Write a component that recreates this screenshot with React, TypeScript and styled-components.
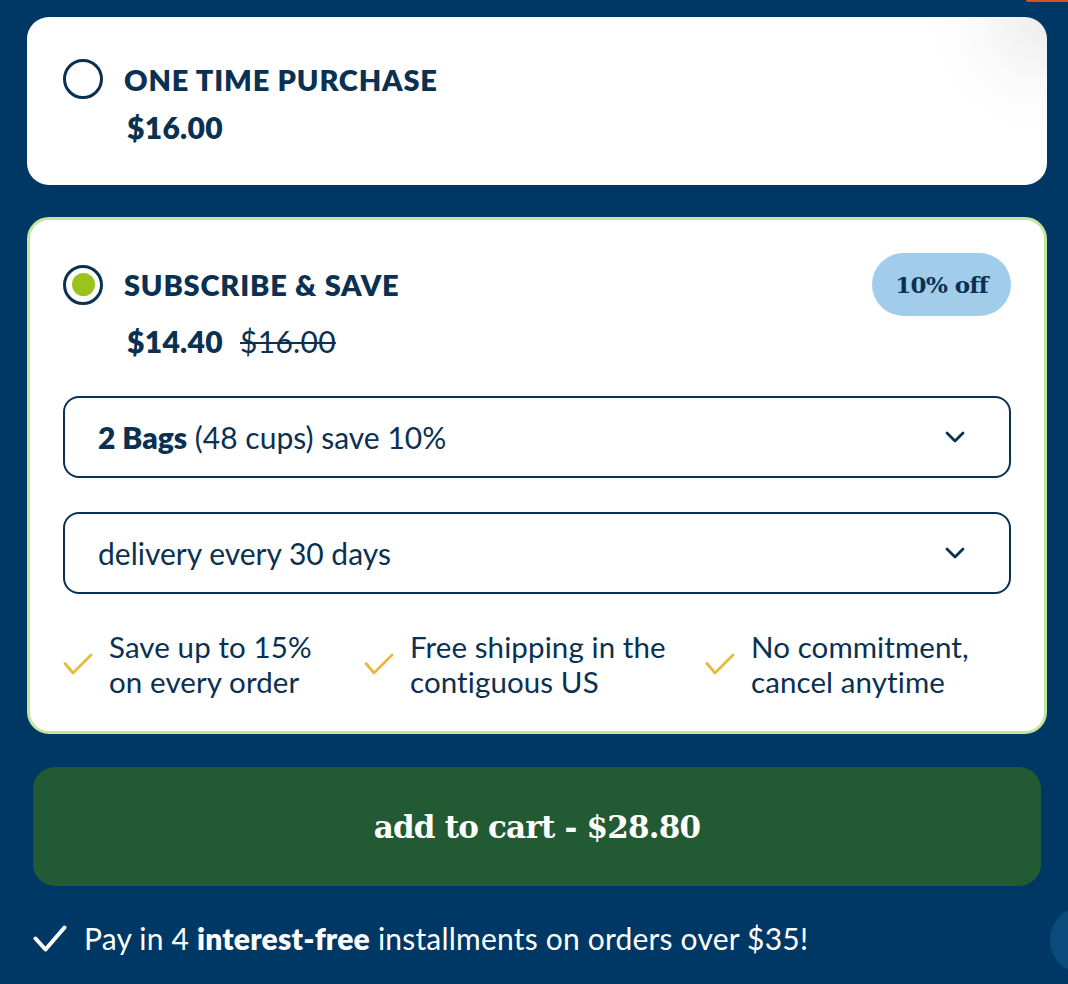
import React from "react";
import styled, { createGlobalStyle } from "styled-components";

const NAVY = "#003865";
const INK = "#0a3152";

const GlobalStyle = createGlobalStyle`
  html, body { margin: 0; padding: 0; }
  body {
    background: ${NAVY};
    font-family: "Lato", "Noto Sans", sans-serif;
    width: 1068px;
    height: 984px;
    overflow: hidden;
    position: relative;
  }
`;

const Page = styled.div`
  position: relative;
  width: 1068px;
  height: 984px;
  padding: 17px 0 0 27px;
  box-sizing: border-box;
`;

const TopTab = styled.div`
  position: absolute;
  top: 0;
  right: 0;
  width: 42px;
  height: 2px;
  background: #d6531f;
  border-radius: 0 0 0 3px;
`;

const ChatBubble = styled.div`
  position: absolute;
  left: 1050px;
  top: 906px;
  width: 68px;
  height: 68px;
  border-radius: 50%;
  background: #0b4b7c;
`;

const Card = styled.div<{ $active?: boolean }>`
  width: 1020px;
  box-sizing: border-box;
  background: #fff;
  border-radius: 22px;
  border: ${(p) => (p.$active ? "3px solid #c6e59c" : "none")};
  padding: ${(p) => (p.$active ? "33px 33px 32px 33px" : "42px 36px 41px 36px")};
  position: relative;
  ${(p) =>
    !p.$active &&
    `background: radial-gradient(circle at 100% 0%, #ececec 0px, #fafafa 70px, #ffffff 120px);`}
`;

const Stack = styled.div`
  display: flex;
  flex-direction: column;
  gap: 32px;
`;

const HeaderRow = styled.div<{ $tall?: boolean }>`
  display: flex;
  align-items: center;
  height: ${(p) => (p.$tall ? "63px" : "40px")};
`;

const Radio = styled.div<{ $checked?: boolean }>`
  width: 40px;
  height: 40px;
  box-sizing: border-box;
  border-radius: 50%;
  border: 3.5px solid ${INK};
  display: flex;
  align-items: center;
  justify-content: center;
  flex-shrink: 0;
  &::after {
    content: "";
    display: ${(p) => (p.$checked ? "block" : "none")};
    width: 23px;
    height: 23px;
    border-radius: 50%;
    background: #9cc21e;
  }
`;

const Title = styled.div`
  margin-left: 21px;
  font-size: 29px;
  font-weight: 800;
  color: ${INK};
  letter-spacing: 0.8px;
  flex: 1;
`;

const Badge = styled.div`
  height: 63px;
  padding: 0 23px;
  border-radius: 32px;
  background: #a1cdea;
  color: ${INK};
  display: flex;
  align-items: center;
  font-family: "DejaVu Serif", serif;
  font-weight: 700;
  font-size: 23px;
  letter-spacing: -0.6px;
`;

const PriceRow = styled.div<{ $gap?: number }>`
  display: flex;
  align-items: baseline;
  gap: 17px;
  margin-left: 64px;
  margin-top: ${(p) => p.$gap ?? 8}px;
  line-height: 34px;
  color: ${INK};
  font-size: 30px;
`;

const Price = styled.span`
  font-weight: 800;
  letter-spacing: 0.3px;
`;

const OldPrice = styled.span`
  font-weight: 400;
  text-decoration: line-through;
  text-decoration-thickness: 2px;
  letter-spacing: 0.3px;
`;

const Select = styled.div`
  height: 82px;
  box-sizing: border-box;
  border: 2px solid ${INK};
  border-radius: 16px;
  display: flex;
  align-items: center;
  justify-content: space-between;
  padding: 0 44px 0 33px;
  color: ${INK};
  font-size: 30px;
  font-weight: 400;
  b { font-weight: 800; }
`;

const Selects = styled.div`
  display: flex;
  flex-direction: column;
  gap: 34px;
  margin-top: 38px;
`;

const Features = styled.div`
  display: grid;
  grid-template-columns: 301px 341px 1fr;
  margin-top: 35px;
`;

const Feature = styled.div`
  display: flex;
  align-items: center;
  gap: 16px;
  color: ${INK};
  font-size: 29.5px;
  line-height: 35px;
  font-weight: 400;
  letter-spacing: 0.1px;
`;

const CartButton = styled.button`
  margin: 33px 0 0 6px;
  width: 1008px;
  height: 119px;
  border: none;
  border-radius: 22px;
  background: #225a33;
  color: #fff;
  font-family: "DejaVu Serif", serif;
  font-weight: 700;
  font-size: 31px;
  letter-spacing: -0.8px;
  display: flex;
  align-items: center;
  justify-content: center;
  cursor: pointer;
`;

const PayNote = styled.div`
  margin: 35px 0 0 6px;
  display: flex;
  align-items: center;
  gap: 17px;
  color: #fff;
  font-size: 30px;
  line-height: 35px;
  font-weight: 400;
  letter-spacing: 0.2px;
  b { font-weight: 800; }
`;

const Chevron = () => (
  <svg width="20" height="12" viewBox="0 0 20 12" fill="none">
    <path d="M2 2l8 8 8-8" stroke={INK} strokeWidth="2.8" strokeLinecap="round" strokeLinejoin="round" />
  </svg>
);

const GoldCheck = () => (
  <svg width="30" height="22" viewBox="0 0 30 22" fill="none" style={{ flexShrink: 0 }}>
    <path d="M2 10.5l8 9.5L28 2" stroke="#e9b93f" strokeWidth="2.8" strokeLinecap="round" strokeLinejoin="round" />
  </svg>
);

const WhiteCheck = () => (
  <svg width="34" height="27" viewBox="0 0 34 27" fill="none">
    <path d="M2.5 13.5l10 11L31.5 2.5" stroke="#fff" strokeWidth="4" strokeLinecap="round" strokeLinejoin="round" />
  </svg>
);

export default function App() {
  return (
    <>
      <GlobalStyle />
      <Page>
        <TopTab />
        <Stack>
          <Card>
            <HeaderRow>
              <Radio />
              <Title>ONE TIME PURCHASE</Title>
            </HeaderRow>
            <PriceRow $gap={11}>
              <Price>$16.00</Price>
            </PriceRow>
          </Card>
          <Card $active>
            <HeaderRow $tall>
              <Radio $checked />
              <Title>SUBSCRIBE &amp; SAVE</Title>
              <Badge>10% off</Badge>
            </HeaderRow>
            <PriceRow>
              <Price>$14.40</Price>
              <OldPrice>$16.00</OldPrice>
            </PriceRow>
            <Selects>
              <Select>
                <span>
                  <b>2 Bags</b> (48 cups) save 10%
                </span>
                <Chevron />
              </Select>
              <Select>
                <span>delivery every 30 days</span>
                <Chevron />
              </Select>
            </Selects>
            <Features>
              <Feature>
                <GoldCheck />
                <span>
                  Save up to 15%
                  <br />
                  on every order
                </span>
              </Feature>
              <Feature>
                <GoldCheck />
                <span>
                  Free shipping in the
                  <br />
                  contiguous US
                </span>
              </Feature>
              <Feature>
                <GoldCheck />
                <span>
                  No commitment,
                  <br />
                  cancel anytime
                </span>
              </Feature>
            </Features>
          </Card>
        </Stack>
        <CartButton>add to cart - $28.80</CartButton>
        <PayNote>
          <WhiteCheck />
          <span>
            Pay in 4 <b>interest-free</b> installments on orders over $35!
          </span>
        </PayNote>
        <ChatBubble />
      </Page>
    </>
  );
}
